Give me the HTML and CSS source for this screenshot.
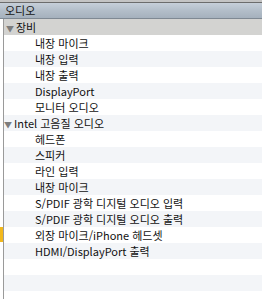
FILE: index.html
```
<!DOCTYPE html>
<html lang="ko">
<head>
    <meta charset="UTF-8">
    <title>오디오</title>
    <link rel="stylesheet" href="styles.css">
</head>
<body>
    <div class="panel">
        <div class="top-edge"></div>
        <div class="header">오디오</div>
        <div class="list">
            <div class="row group selected"><span class="arrow">▼</span>장비</div>
            <div class="row child">내장 마이크</div>
            <div class="row child">내장 입력</div>
            <div class="row child">내장 출력</div>
            <div class="row child">DisplayPort</div>
            <div class="row child">모니터 오디오</div>
            <div class="row group first"><span class="arrow">▼</span>Intel 고음질 오디오</div>
            <div class="row child">헤드폰</div>
            <div class="row child">스피커</div>
            <div class="row child">라인 입력</div>
            <div class="row child">내장 마이크</div>
            <div class="row child">S/PDIF 광학 디지털 오디오 입력</div>
            <div class="row child">S/PDIF 광학 디지털 오디오 출력</div>
            <div class="row child marked">외장 마이크/iPhone 헤드셋</div>
            <div class="row child">HDMI/DisplayPort 출력</div>
            <div class="row"></div>
            <div class="row"></div>
            <div class="row"></div>
        </div>
    </div>
</body>
</html>
```

FILE: styles.css
```
body {
    margin: 0;
    padding: 0;
    background: #ffffff;
    font-family: "Noto Sans CJK KR", "Liberation Sans", sans-serif;
    font-size: 11px;
    color: #111111;
    overflow: hidden;
}

.panel {
    width: 262px;
    height: 299px;
    overflow: hidden;
}

.top-edge {
    height: 2px;
    background: #c4c4c4;
}

.header {
    height: 15px;
    line-height: 15px;
    padding-left: 5px;
    border-top: 1px solid #6c6c6c;
    border-bottom: 1px solid #7f8993;
    background: linear-gradient(#c6cfd9, #b3bec9 50%, #a5b1bd);
    color: #161616;
}

.list {
    margin-left: 3px;
    border-left: 1px solid #9a9a9a;
}

.row {
    height: 16px;
    line-height: 16px;
    white-space: nowrap;
    position: relative;
}

.row:nth-child(odd) {
    background: #f3f5f8;
}

.row:nth-child(even) {
    background: #ffffff;
}

.row.selected {
    background: #d3d3d1;
}

.group {
    padding-left: 2px;
}

.first {
    padding-left: 0;
}

.arrow {
    display: inline-block;
    width: 10px;
    font-size: 8px;
    color: #7c7c7c;
}

.child {
    padding-left: 31px;
}

/* 노란 표시 */
.marked::before {
    content: "";
    position: absolute;
    left: -4px;
    top: 0;
    width: 3px;
    height: 15px;
    background: #f2b81c;
}
```
